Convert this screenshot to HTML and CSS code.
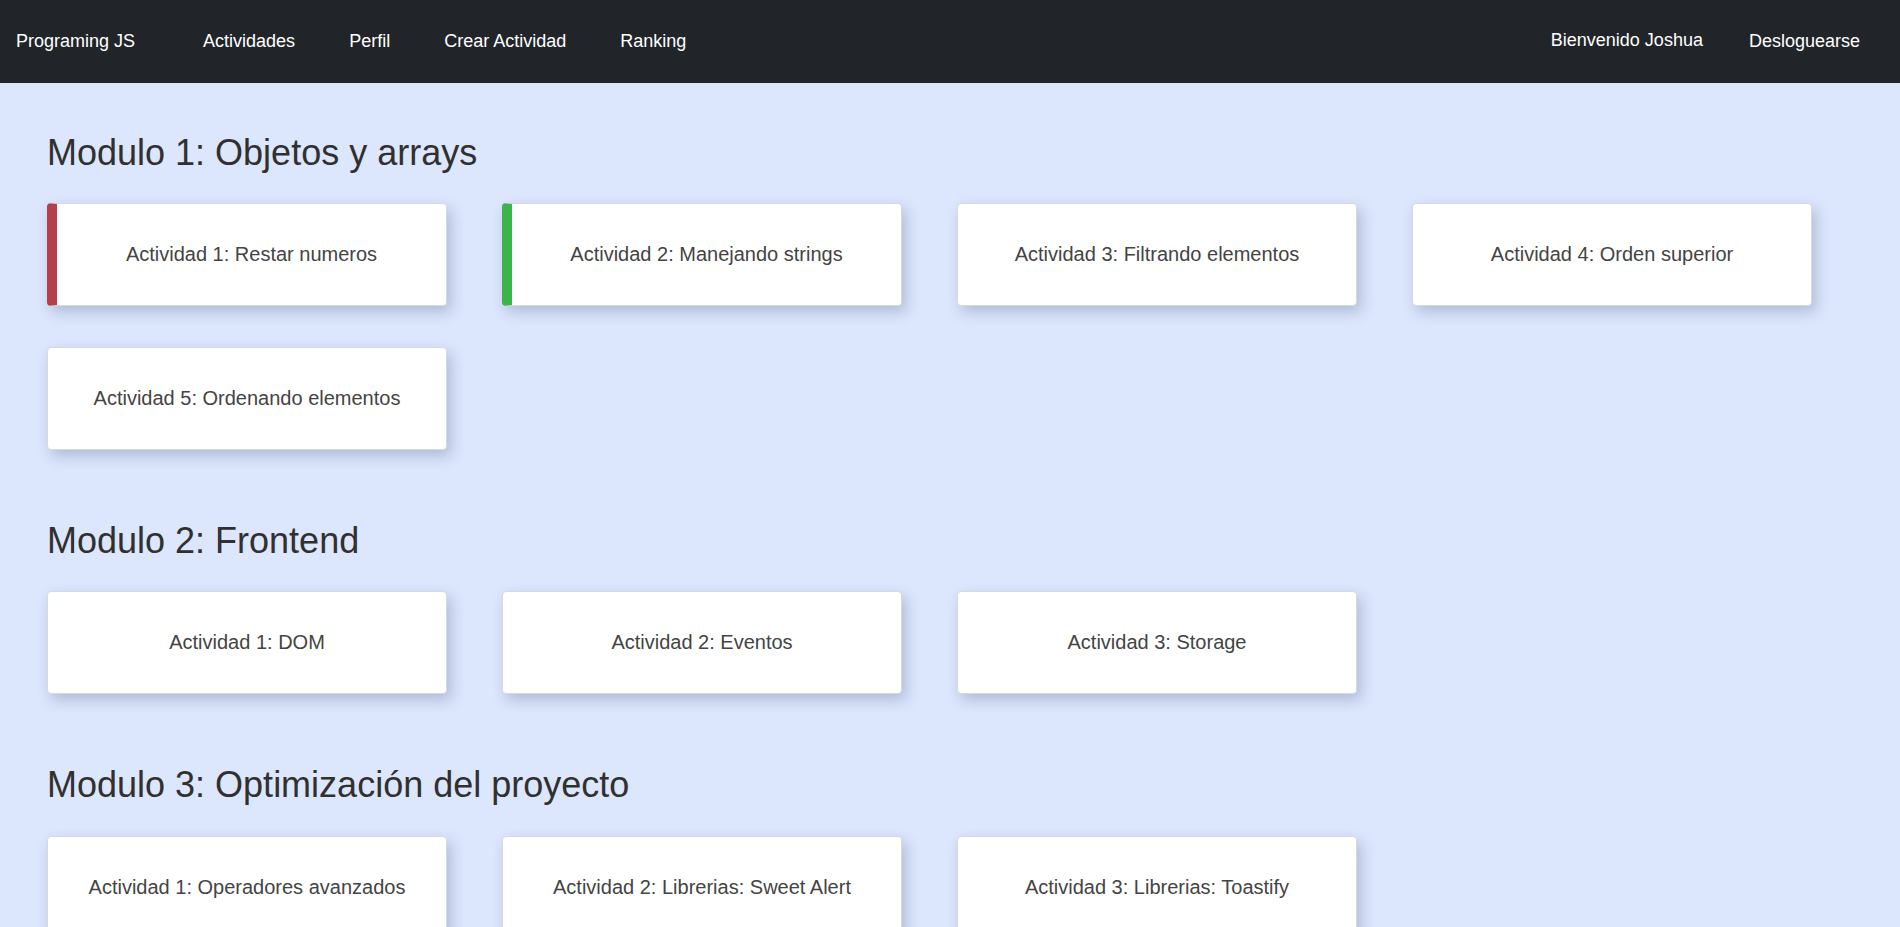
FILE: index.html
```html
<!DOCTYPE html>
<html lang="es">
<head>
<meta charset="utf-8">
<title>Programing JS</title>
<link rel="stylesheet" href="styles.css">
</head>
<body>
<nav class="navbar">
  <a class="brand" href="#">Programing JS</a>
  <div class="nav-links">
    <a class="nav-link" href="#">Actividades</a>
    <a class="nav-link" href="#">Perfil</a>
    <a class="nav-link" href="#">Crear Actividad</a>
    <a class="nav-link" href="#">Ranking</a>
  </div>
  <div class="nav-right">
    <span class="welcome">Bienvenido Joshua</span>
    <a class="nav-link logout" href="#">Desloguearse</a>
  </div>
</nav>
<main class="content">
  <section class="module">
    <h2 class="module-title">Modulo 1: Objetos y arrays</h2>
    <div class="cards">
      <div class="card card-fail">Actividad 1: Restar numeros</div>
      <div class="card card-done">Actividad 2: Manejando strings</div>
      <div class="card">Actividad 3: Filtrando elementos</div>
      <div class="card">Actividad 4: Orden superior</div>
      <div class="card">Actividad 5: Ordenando elementos</div>
    </div>
  </section>
  <section class="module">
    <h2 class="module-title">Modulo 2: Frontend</h2>
    <div class="cards">
      <div class="card">Actividad 1: DOM</div>
      <div class="card">Actividad 2: Eventos</div>
      <div class="card">Actividad 3: Storage</div>
    </div>
  </section>
  <section class="module">
    <h2 class="module-title">Modulo 3: Optimización del proyecto</h2>
    <div class="cards">
      <div class="card">Actividad 1: Operadores avanzados</div>
      <div class="card">Actividad 2: Librerias: Sweet Alert</div>
      <div class="card">Actividad 3: Librerias: Toastify</div>
    </div>
  </section>
</main>
</body>
</html>
```

FILE: styles.css
```css
html, body {
  margin: 0;
  padding: 0;
}

body {
  background: #dce6fd;
  font-family: "Liberation Sans", Arial, sans-serif;
  color: #333;
}

a {
  text-decoration: none;
  color: inherit;
}

.navbar {
  display: flex;
  align-items: center;
  height: 83px;
  background: #212529;
  color: #ffffff;
  padding: 0 40px 0 16px;
  font-size: 18px;
}

.brand {
  margin-right: 68px;
}

.nav-links {
  display: flex;
  gap: 54px;
}

.nav-right {
  margin-left: auto;
  display: flex;
  align-items: center;
  gap: 46px;
}

.welcome {
  margin-bottom: 2px;
}

.content {
  padding: 48px 47px 40px;
}

.module {
  margin-bottom: 69px;
}

.module-title {
  margin: 0 0 29px;
  font-size: 36px;
  line-height: 1.2;
  font-weight: 400;
  color: #303030;
}

.cards {
  display: flex;
  flex-wrap: wrap;
  gap: 41px 55px;
}

.card {
  box-sizing: border-box;
  width: 400px;
  height: 103px;
  background: #ffffff;
  border: 1px solid #d6d9e0;
  border-radius: 4px;
  box-shadow: 4px 6px 14px rgba(60, 80, 120, 0.28);
  display: flex;
  align-items: center;
  justify-content: center;
  font-size: 20px;
  color: #444444;
}

.card-fail {
  border-left: 10px solid #b3404b;
}

.card-done {
  border-left: 10px solid #3bb44a;
}
```
